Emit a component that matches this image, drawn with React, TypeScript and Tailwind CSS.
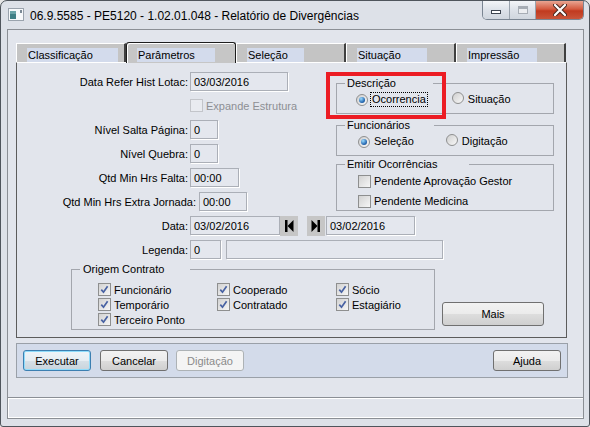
import React from 'react';

const ui = "font-['Liberation_Sans',Arial,sans-serif]";

function Check({ checked = false, disabled = false }: { checked?: boolean; disabled?: boolean }) {
  return (
    <span
      className={`inline-flex h-[13px] w-[13px] shrink-0 items-center justify-center border ${
        disabled ? 'border-[#c3c5ca] bg-[#e9ebf0]' : 'border-[#8e8f8f] bg-[linear-gradient(135deg,#d2d2d2,#f6f6f6)]'
      }`}
    >
      {checked && (
        <svg width="9" height="9" viewBox="0 0 9 9">
          <path d="M1.3 4.6 L3.5 7.2 L7.6 1.2" fill="none" stroke="#4862a3" strokeWidth="1.7" />
        </svg>
      )}
    </span>
  );
}

function Radio({ on = false }: { on?: boolean }) {
  return (
    <span className="inline-flex h-[12px] w-[12px] shrink-0 items-center justify-center rounded-full border border-[#8e8f8f] bg-[linear-gradient(135deg,#cfcfcf,#f8f8f8)]">
      {on && <span className="h-[6px] w-[6px] rounded-full bg-[radial-gradient(circle_at_35%_30%,#9bdcff,#2466b0_65%,#123f7a)]" />}
    </span>
  );
}

function Field({ value = '', w }: { value?: string; w: string }) {
  return (
    <div className={`flex h-[19px] items-center border border-[#abafb7] bg-[#e4e7ee] pl-[3px] shadow-[1px_1px_0_#ffffff] ${w}`}>
      {value}
    </div>
  );
}

function Row({ label, lw = 'w-[173px] pr-[2px]', children }: { label: string; lw?: string; children: React.ReactNode }) {
  return (
    <div className="flex h-[19px] items-center">
      <span className={`${lw} text-right`}>{label}</span>
      <div className="flex items-center">{children}</div>
    </div>
  );
}

function Btn({ label, kind = 'normal', w = 'w-[68px]' }: { label: string; kind?: 'normal' | 'default' | 'disabled'; w?: string }) {
  const look =
    kind === 'disabled'
      ? 'border-[#adb2b5] bg-[#f4f4f4] text-[#8a8a8a]'
      : kind === 'default'
      ? 'border-[#3c7fb1] shadow-[inset_0_0_0_1px_#8fdcfb] bg-[linear-gradient(#eef4f8_0%,#e6edf2_50%,#d6e0e7_51%,#c9d4dc_100%)]'
      : 'border-[#707070] bg-[linear-gradient(#f2f2f2_0%,#ebebeb_50%,#dddddd_51%,#cfcfcf_100%)]';
  return (
    <div className={`flex h-[21px] items-center justify-center rounded-[3px] border ${look} ${w}`}>{label}</div>
  );
}

function NavBtn({ dir }: { dir: 'first' | 'last' }) {
  return (
    <div className="flex h-[20px] w-[18px] items-center justify-center bg-[#c6c6c6]">
      <svg width="10" height="12" viewBox="0 0 10 12">
        {dir === 'first' ? (
          <>
            <rect x="1" y="0" width="2.5" height="12" fill="#000" />
            <path d="M9.5 0 L3.5 6 L9.5 12 Z" fill="#000" />
          </>
        ) : (
          <>
            <path d="M0.5 0 L6.5 6 L0.5 12 Z" fill="#000" />
            <rect x="6.5" y="0" width="2.5" height="12" fill="#000" />
          </>
        )}
      </svg>
    </div>
  );
}

function Group({ title, tw, className, children }: { title: string; tw: string; className: string; children: React.ReactNode }) {
  return (
    <fieldset className={`min-w-0 border border-[#a3a6ad] ${className}`}>
      <legend className={`ml-[8px] pl-[2px] leading-[14px] ${tw}`}>{title}</legend>
      {children}
    </fieldset>
  );
}

const tabs = [
  { label: 'Classificação', hl: 'w-[91px]' },
  { label: 'Parâmetros', hl: 'w-[78px]', active: true },
  { label: 'Seleção', hl: 'w-[57px]' },
  { label: 'Situação', hl: 'w-[70px]' },
  { label: 'Impressão', hl: 'w-[70px]' },
];

export default function App() {
  return (
    <div className={`relative h-[427px] w-[590px] overflow-hidden bg-[#e6e6e6] text-[11px] leading-[14px] text-black ${ui}`}>
      <div className="flex h-full w-full flex-col rounded-t-[7px] rounded-b-[3px] border border-[#4f555c] bg-[#dde1e8]">
        {/* title bar */}
        <div className="flex h-[28px] items-start">
          <svg className="ml-[7px] mt-[7px]" width="16" height="13" viewBox="0 0 16 13">
            <rect x="0.5" y="0.5" width="15" height="12" fill="#f7f9fb" stroke="#9aa3ad" />
            <rect x="2" y="3" width="6" height="8" fill="#3f7f86" />
            <rect x="2" y="3" width="6" height="3" fill="#6aa3a8" />
            <rect x="12" y="2" width="2" height="3" fill="#7c8a96" />
          </svg>
          <span className="ml-[6px] mt-[8px] text-[12px] leading-[14px]">
            06.9.5585 - PE5120 - 1.02.01.048 - Relatório de Divergências
          </span>
          <div className="ml-auto mr-[5px] flex h-[19px] overflow-hidden rounded-b-[5px] border border-t-0 border-[#7a8592]">
            <div className="flex w-[27px] items-center justify-center border-r border-[#9aa3ad] bg-[linear-gradient(#f3f5f8,#dde2e9_50%,#d0d6de)]">
              <span className="mt-[3px] h-[4px] w-[10px] border border-[#3d4550] bg-white" />
            </div>
            <div className="flex w-[26px] items-center justify-center border-r border-[#9aa3ad] bg-[linear-gradient(#f3f5f8,#dde2e9_50%,#d0d6de)]">
              <span className="h-[8px] w-[10px] border border-[#a7adb5] bg-[#eceef1] shadow-[inset_0_2px_0_#a7adb5]" />
            </div>
            <div className="flex w-[47px] items-center justify-center bg-[linear-gradient(#e9a592,#d45a3f_45%,#c13a1f_55%,#c9553a)]">
              <svg width="14" height="12" viewBox="0 0 14 12">
                <path d="M2 1 L12 11 M12 1 L2 11" stroke="#4a2a22" strokeWidth="4.2" strokeLinecap="round" />
                <path d="M2 1 L12 11 M12 1 L2 11" stroke="#ffffff" strokeWidth="2.2" strokeLinecap="round" />
              </svg>
            </div>
          </div>
        </div>

        {/* client area */}
        <div className="ml-[6px] flex h-[390px] w-[577px] flex-col border border-[#8b8f95] bg-[#e2e5ec]">
          <div className="pl-[8px] pt-[12px]">
            {/* tabs */}
            <div className="flex h-[20px] items-end">
              {tabs.map((t) =>
                t.active ? (
                  <div
                    key={t.label}
                    className="relative z-10 -mb-[1px] flex h-[21px] w-[110px] items-end rounded-t-[3px] border border-b-0 border-[#1e1e1e] bg-[#c6c6c6] pl-[10px] shadow-[inset_1px_1px_0_#ffffff]"
                  >
                    <span className={`mb-[1px] h-[14px] bg-[#d3dbec] pl-[1px] ${t.hl}`}>{t.label}</span>
                  </div>
                ) : (
                  <div
                    key={t.label}
                    className="flex h-[19px] w-[110px] items-end border-t border-l border-r-2 border-t-white border-l-white border-r-[#404040] bg-[#c4c4c4] pl-[10px]"
                  >
                    <span className={`h-[14px] bg-[#d3dbec] pl-[1px] ${t.hl}`}>{t.label}</span>
                  </div>
                )
              )}
            </div>

            {/* tab page */}
            <div className="h-[276px] w-[551px] border border-l-[#5c5c5c] border-t-white border-r-[#5c5c5c] border-b-[#5c5c5c] bg-[#e2e5ec] pt-[9px]">
              <div className="flex">
                <div className="flex w-[319px] flex-col gap-[5px]">
                  <Row label="Data Refer Hist Lotac:">
                    <Field value="03/03/2016" w="w-[98px]" />
                  </Row>
                  <div className="flex h-[19px] items-center pl-[173px] text-[#8d8f94]">
                    <Check disabled />
                    <span className="ml-[3px]">Expande Estrutura</span>
                  </div>
                  <Row label="Nível Salta Página:">
                    <Field value="0" w="w-[28px]" />
                  </Row>
                  <Row label="Nível Quebra:">
                    <Field value="0" w="w-[28px]" />
                  </Row>
                  <Row label="Qtd Min Hrs Falta:">
                    <Field value="00:00" w="w-[49px]" />
                  </Row>
                  <Row label="Qtd Min Hrs Extra Jornada:" lw="w-[182px] pr-[3px]">
                    <Field value="00:00" w="w-[48px]" />
                  </Row>
                </div>

                <div className="flex w-[218px] flex-col">
                  <Group title="Descrição" tw="w-[88px]" className="mt-[4px] h-[38px]">
                    <div className="flex h-[18px] items-center">
                      <span className="ml-[19px]"><Radio on /></span>
                      <span className="ml-[2px] border border-dotted border-black px-[1px] leading-[13px]">Ocorrencia</span>
                      <span className="ml-[24px]"><Radio /></span>
                      <span className="ml-[4px]">Situação</span>
                    </div>
                  </Group>
                  <Group title="Funcionários" tw="w-[89px]" className="mt-[4px] h-[38px]">
                    <div className="flex h-[18px] items-center">
                      <span className="ml-[21px]"><Radio on /></span>
                      <span className="ml-[4px]">Seleção</span>
                      <span className="ml-[32px]"><Radio /></span>
                      <span className="ml-[4px]">Digitação</span>
                    </div>
                  </Group>
                  <Group title="Emitir Ocorrências" tw="w-[124px]" className="mt-[1px] h-[54px]">
                    <div className="flex h-[20px] items-center pl-[21px]">
                      <Check />
                      <span className="ml-[3px]">Pendente Aprovação Gestor</span>
                    </div>
                    <div className="flex h-[20px] items-center pl-[21px]">
                      <Check />
                      <span className="ml-[3px]">Pendente Medicina</span>
                    </div>
                  </Group>
                </div>
              </div>

              <div className="mt-[5px]">
                <Row label="Data:">
                  <Field value="03/02/2016" w="w-[90px]" />
                  <NavBtn dir="first" />
                  <span className="ml-[9px]">
                    <NavBtn dir="last" />
                  </span>
                  <span className="ml-[1px]">
                    <Field value="03/02/2016" w="w-[89px]" />
                  </span>
                </Row>
              </div>
              <div className="mt-[5px]">
                <Row label="Legenda:">
                  <Field value="0" w="w-[31px]" />
                  <span className="ml-[5px]">
                    <Field w="w-[217px]" />
                  </span>
                </Row>
              </div>

              <div className="mt-[3px] flex items-start">
                <Group title="Origem Contrato" tw="w-[110px] pl-[3px]" className="ml-[54px] h-[68px] w-[364px] shrink-0">
                  <div className="grid grid-cols-[119px_119px_90px] pl-[26px] pt-[6px]">
                    {[
                      ['Funcionário', 'Cooperado', 'Sócio'],
                      ['Temporário', 'Contratado', 'Estagiário'],
                      ['Terceiro Ponto', '', ''],
                    ].flatMap((row, r) =>
                      row.map((label, c) => (
                        <div key={`${r}-${c}`} className="flex h-[15px] items-center">
                          {label && (
                            <>
                              <Check checked />
                              <span className="ml-[3px]">{label}</span>
                            </>
                          )}
                        </div>
                      ))
                    )}
                  </div>
                </Group>
                <div className="ml-[7px] mt-[40px]">
                  <div className="flex h-[24px] w-[102px] items-center justify-center rounded-[3px] border border-[#707070] bg-[linear-gradient(#f2f2f2_0%,#ebebeb_50%,#dddddd_51%,#cfcfcf_100%)]">
                    Mais
                  </div>
                </div>
              </div>
            </div>

            {/* action bar */}
            <div className="mt-[5px] flex h-[35px] w-[552px] items-center border border-[#9aa0a8] bg-[#d3dbea] px-[6px]">
              <Btn label="Executar" kind="default" />
              <span className="ml-[9px]">
                <Btn label="Cancelar" />
              </span>
              <span className="ml-[8px]">
                <Btn label="Digitação" kind="disabled" />
              </span>
              <span className="ml-auto">
                <Btn label="Ajuda" />
              </span>
            </div>
          </div>

          {/* status bar */}
          <div className="mt-auto h-[21px] border-t border-[#8b8f95] bg-[#e2e5ec] shadow-[inset_1px_1px_0_#ffffff,inset_0_-1px_0_#ffffff]" />
        </div>
      </div>

      {/* highlight frame */}
      <div className="absolute left-[326px] top-[72px] h-[47px] w-[120px] border-[4px] border-[#ec1c24]" />
    </div>
  );
}
